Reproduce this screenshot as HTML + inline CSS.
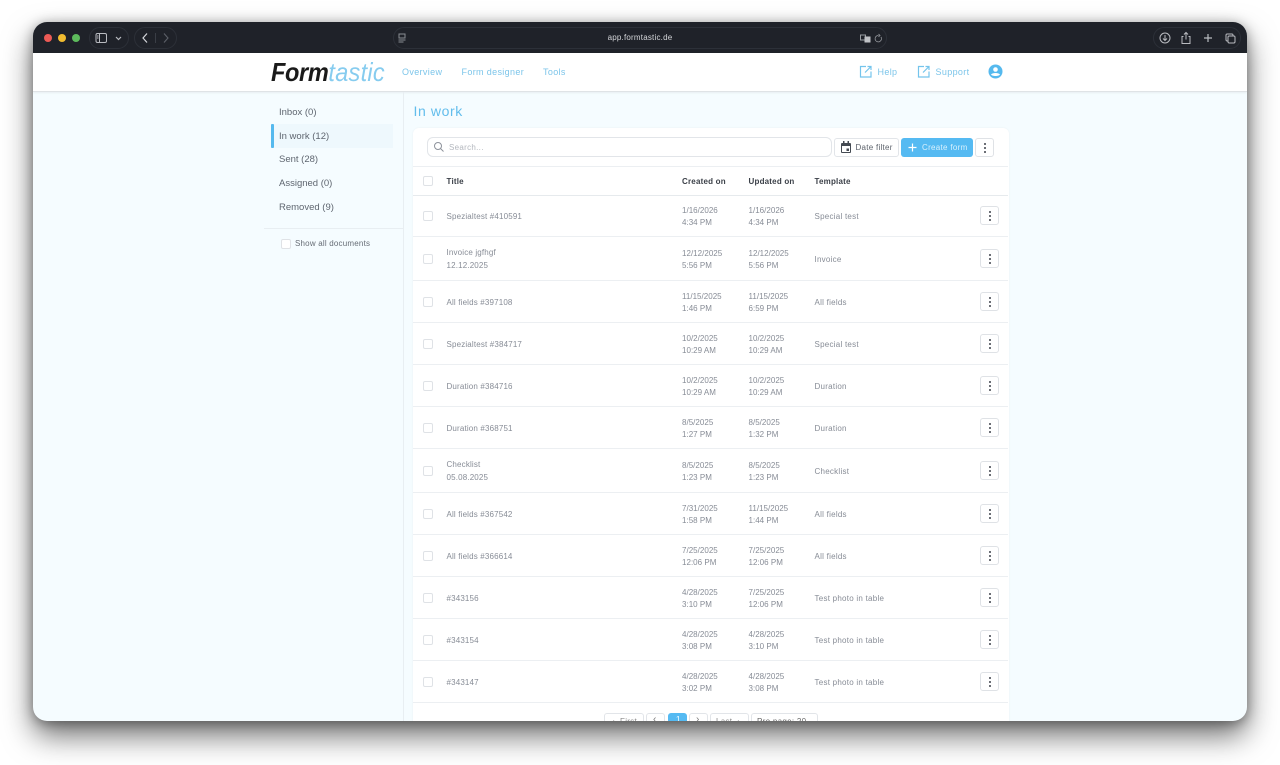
<!DOCTYPE html>
<html><head><meta charset="utf-8">
<style>
html,body{margin:0;padding:0;width:1280px;height:765px;overflow:hidden;background:#fff;font-family:"Liberation Sans",sans-serif}
.a{position:absolute;white-space:nowrap}
#win{position:absolute;left:33px;top:22px;width:1214px;height:699px;border-radius:14px;overflow:hidden;background:#f5fcff;box-shadow:0 15px 30px rgba(0,0,0,.55),0 2px 12px rgba(0,0,0,.35)}
#in{position:absolute;left:-33px;top:-22px;width:1280px;height:765px}
.pill{position:absolute;border:1px solid #2c3038;background:#1f2229;box-sizing:border-box}
.nav{font-size:9px;color:#7cc5ea;letter-spacing:.35px;top:67px}
.side{font-size:9.5px;color:#5f6670;left:279px;letter-spacing:0}
.th{font-size:8px;font-weight:bold;color:#3a3f47;top:177px;letter-spacing:.2px}
.td{font-size:8px;color:#878c96;letter-spacing:.3px}
.td[style*="left:446.5px"]{letter-spacing:.16px}
.td[style*="left:682px"],.td[style*="left:748.5px"]{letter-spacing:.02px}
.td[style*="left:814.5px"]{letter-spacing:.25px}
.line{position:absolute;left:413px;width:595px;height:1px;background:#eceff2}
.cb{position:absolute;left:422.5px;width:8px;height:8px;border:1px solid #dfe2e6;border-radius:2px;background:#fff}
.btn{position:absolute;box-sizing:border-box;border:1px solid #e2e5e9;border-radius:3px;background:#fff}
.km{position:absolute;left:980px;width:19px;height:19px;box-sizing:border-box;border:1px solid #dfe2e6;border-radius:3px;background:#fff}
.km i{position:absolute;left:7.5px;width:2px;height:2px;border-radius:1px;background:#3d424a}
.km i:nth-child(1){top:4px}.km i:nth-child(2){top:8px}.km i:nth-child(3){top:12px}
</style></head><body>
<div id="win"><div id="in">
<!-- toolbar -->
<div class="a" style="left:33px;top:22px;width:1214px;height:31px;background:#1f2229"></div>
<div class="a" style="left:44px;top:34px;width:8px;height:8px;border-radius:50%;background:#ec5a55"></div>
<div class="a" style="left:58px;top:34px;width:8px;height:8px;border-radius:50%;background:#f1bc30"></div>
<div class="a" style="left:71.5px;top:34px;width:8px;height:8px;border-radius:50%;background:#5dbb5c"></div>
<div class="pill" style="left:89px;top:27px;width:40px;height:22px;border-radius:11px"></div>
<div class="pill" style="left:134px;top:27px;width:43px;height:22px;border-radius:11px"></div>
<div class="pill" style="left:393px;top:27px;width:494px;height:22px;border-radius:11px"></div>
<div class="pill" style="left:1153px;top:27px;width:88px;height:22px;border-radius:11px"></div>
<svg class="a" style="left:0;top:22px" width="1280" height="31" fill="none" stroke="#b9bbc0" stroke-width="1" viewBox="0 22 1280 31">
<rect x="96" y="33.5" width="10.5" height="9" rx="1.5"/><path d="M99.5 33.5v9M97 36h1.5M97 38h1.5"/>
<path d="M116 37l2.5 2.5 2.5-2.5" stroke-width="1.2"/>
<path d="M147 33.5l-4 4.500 4 4.500" stroke-width="1.200" stroke="#d4d6da"/>
<path d="M155.5 33v10" stroke="#3a3e46"/>
<path d="M164 33.5l4 4.500-4 4.500" stroke-width="1.100" stroke="#5c6068"/>
<path d="M399 34h6v4h-6zM398.5 40h7M398.5 42h5" stroke="#8a8d93"/>
<rect x="860.5" y="35" width="5" height="5" stroke="#9a9da2"/><rect x="865" y="37" width="5" height="5" fill="#c0c2c6" stroke="#c0c2c6"/>
<path d="M881 37a3.200 3.200 0 1 1-2.500-1.500M878.500 34l1.500 1.500-1.500 1.300" stroke="#9a9da2" stroke-width=".8"/>
<circle cx="1165" cy="38" r="5"/><path d="M1165 35v5M1163 38.500l2 2 2-2"/>
<path d="M1183.5 36.500h-1.500v7h8v-7h-1.500M1186 32.500v7M1184 34.500l2-2 2 2"/>
<path d="M1208 34v8M1204 38h8" stroke-width="1.200"/>
<rect x="1226" y="34" width="7" height="7" rx="1.200"/><rect x="1228" y="36" width="7" height="7" rx="1.200" fill="#1f2229"/>
</svg>
<div class="a" style="left:540px;top:33px;width:200px;text-align:center;font-size:8px;color:#d4d6d9;letter-spacing:.2px">app.formtastic.de</div>
<!-- header -->
<div class="a" style="left:33px;top:53px;width:1214px;height:38px;background:#fff;border-bottom:1px solid #dfe3e6;box-shadow:0 1px 2px rgba(0,0,0,.06)"></div>
<div class="a" style="left:271px;top:57.5px;font-size:26px;line-height:28px;font-style:italic;letter-spacing:-.4px;transform:scaleX(.905);transform-origin:0 50%"><span style="font-weight:bold;color:#1a1a1a">Form</span><span style="color:#86ccef;letter-spacing:.3px">tastic</span></div>
<div class="a nav" style="left:402px">Overview</div>
<div class="a nav" style="left:461.5px">Form designer</div>
<div class="a nav" style="left:543px">Tools</div>
<div class="a nav" style="left:877.5px">Help</div>
<div class="a nav" style="left:935.5px">Support</div>
<svg class="a" style="left:0;top:53px" width="1280" height="38" fill="none" viewBox="0 53 1280 38">
<path d="M866 66.500h-5.500v10.500h10.500v-5.500M865 72.500l5.500-5.500M867.500 66.500h3.500v3.500" stroke="#74c4ec" stroke-width="1.200"/>
<path d="M924 66.500h-5.500v10.500h10.500v-5.500M923 72.500l5.500-5.500M925.500 66.500h3.500v3.500" stroke="#74c4ec" stroke-width="1.200"/>
<circle cx="995.5" cy="71.5" r="7" fill="#55b9ee"/><circle cx="995.5" cy="69.5" r="2.300" fill="#fff"/><path d="M991 74.500c1.500-2 7.500-2 9 0-1 2-8 2-9 0z" fill="#fff"/>
</svg>
<!-- sidebar -->
<div class="a" style="left:403px;top:92px;width:1px;height:629px;background:#e8eef2"></div>
<div class="a" style="left:271px;top:124px;width:122px;height:24px;background:#eef8fd"></div>
<div class="a" style="left:271px;top:124px;width:3px;height:24px;background:#55b9ee;border-radius:1px"></div>
<div class="a side" style="top:107px">Inbox (0)</div>
<div class="a side" style="top:130.5px">In work (12)</div>
<div class="a side" style="top:154px">Sent (28)</div>
<div class="a side" style="top:178px">Assigned (0)</div>
<div class="a side" style="top:201.5px">Removed (9)</div>
<div class="a" style="left:264px;top:228px;width:139px;height:1px;background:#e8eef2"></div>
<div class="a" style="left:281px;top:239px;width:8px;height:8px;border:1px solid #dfe2e6;border-radius:2px;background:#fff"></div>
<div class="a" style="left:295px;top:239px;font-size:8px;color:#666c75;letter-spacing:.2px">Show all documents</div>
<!-- content -->
<div class="a" style="left:413.5px;top:102.5px;font-size:14px;color:#62bdec;letter-spacing:.6px">In work</div>
<div class="a" style="left:413px;top:128px;width:596px;height:600px;background:#fff;border-radius:6px 6px 0 0;box-shadow:0 0 2px rgba(0,0,0,.05)"></div>
<div class="btn" style="left:427px;top:137px;width:405px;height:20px;border-radius:6px"></div>
<svg class="a" style="left:433px;top:141px" width="12" height="12" fill="none" stroke="#8d929b" stroke-width="1"><circle cx="5" cy="5" r="3.500"/><path d="M7.500 7.500l3 3"/></svg>
<div class="a" style="left:449px;top:143px;font-size:8px;color:#b3b7be;letter-spacing:.3px">Search...</div>
<div class="btn" style="left:834px;top:138px;width:65px;height:19px"></div>
<svg class="a" style="left:840px;top:141px" width="12" height="12"><path d="M2 2h8a1 1 0 0 1 1 1v8a1 1 0 0 1-1 1H2a1 1 0 0 1-1-1V3a1 1 0 0 1 1-1zm0 3v6h8V5zM3 0h1.500v2H3zM7.500 0H9v2H7.500zM6.500 7.500h2.500V10H6.500z" fill="#444a52" fill-rule="evenodd"/></svg>
<div class="a" style="left:855.5px;top:143px;font-size:8px;color:#5d636c;letter-spacing:.27px">Date filter</div>
<div class="a" style="left:901px;top:138px;width:72px;height:19px;background:#55baf2;border-radius:3px"></div>
<svg class="a" style="left:908px;top:143px" width="9" height="9" stroke="#fff" stroke-width="1.200"><path d="M4.500 .5v8M.5 4.500h8"/></svg>
<div class="a" style="left:922px;top:143px;font-size:8px;color:#d9f1fd;letter-spacing:.3px">Create form</div>
<div class="km" style="left:975px;top:138px"><i></i><i></i><i></i></div>
<div class="line" style="top:166px"></div>
<div class="line" style="top:195px;background:#e6eaed"></div>
<div class="cb" style="top:176px"></div>
<div class="a th" style="left:446.5px">Title</div>
<div class="a th" style="left:682px">Created on</div>
<div class="a th" style="left:748.5px">Updated on</div>
<div class="a th" style="left:814.5px">Template</div>

<!-- row 1 -->
<div class="cb" style="top:210.5px"></div><div class="a td" style="left:446.5px;top:211.5px">Spezialtest #410591</div>
<div class="a td" style="left:682px;top:205px;line-height:11.5px">1/16/2026<br>4:34 PM</div><div class="a td" style="left:748.5px;top:205px;line-height:11.5px">1/16/2026<br>4:34 PM</div>
<div class="a td" style="left:814.5px;top:211.5px">Special test</div><div class="km" style="top:206px"><i></i><i></i><i></i></div><div class="line" style="top:236px"></div>
<!-- row 2 -->
<div class="cb" style="top:253.5px"></div><div class="a td" style="left:446.5px;top:245.5px;line-height:13.5px">Invoice jgfhgf<br>12.12.2025</div>
<div class="a td" style="left:682px;top:248px;line-height:11.5px">12/12/2025<br>5:56 PM</div><div class="a td" style="left:748.5px;top:248px;line-height:11.5px">12/12/2025<br>5:56 PM</div>
<div class="a td" style="left:814.5px;top:254.5px">Invoice</div><div class="km" style="top:249px"><i></i><i></i><i></i></div><div class="line" style="top:280px"></div>
<!-- row 3 -->
<div class="cb" style="top:296.5px"></div><div class="a td" style="left:446.5px;top:297.5px">All fields #397108</div>
<div class="a td" style="left:682px;top:291px;line-height:11.5px">11/15/2025<br>1:46 PM</div><div class="a td" style="left:748.5px;top:291px;line-height:11.5px">11/15/2025<br>6:59 PM</div>
<div class="a td" style="left:814.5px;top:297.5px">All fields</div><div class="km" style="top:292px"><i></i><i></i><i></i></div><div class="line" style="top:322px"></div>
<!-- row 4 -->
<div class="cb" style="top:338.5px"></div><div class="a td" style="left:446.5px;top:339.5px">Spezialtest #384717</div>
<div class="a td" style="left:682px;top:333px;line-height:11.5px">10/2/2025<br>10:29 AM</div><div class="a td" style="left:748.5px;top:333px;line-height:11.5px">10/2/2025<br>10:29 AM</div>
<div class="a td" style="left:814.5px;top:339.5px">Special test</div><div class="km" style="top:334px"><i></i><i></i><i></i></div><div class="line" style="top:364px"></div>
<!-- row 5 -->
<div class="cb" style="top:380.5px"></div><div class="a td" style="left:446.5px;top:381.5px">Duration #384716</div>
<div class="a td" style="left:682px;top:375px;line-height:11.5px">10/2/2025<br>10:29 AM</div><div class="a td" style="left:748.5px;top:375px;line-height:11.5px">10/2/2025<br>10:29 AM</div>
<div class="a td" style="left:814.5px;top:381.5px">Duration</div><div class="km" style="top:376px"><i></i><i></i><i></i></div><div class="line" style="top:406px"></div>
<!-- row 6 -->
<div class="cb" style="top:422.5px"></div><div class="a td" style="left:446.5px;top:423.5px">Duration #368751</div>
<div class="a td" style="left:682px;top:417px;line-height:11.5px">8/5/2025<br>1:27 PM</div><div class="a td" style="left:748.5px;top:417px;line-height:11.5px">8/5/2025<br>1:32 PM</div>
<div class="a td" style="left:814.5px;top:423.5px">Duration</div><div class="km" style="top:418px"><i></i><i></i><i></i></div><div class="line" style="top:448px"></div>
<!-- row 7 -->
<div class="cb" style="top:465.5px"></div><div class="a td" style="left:446.5px;top:457.5px;line-height:13.5px">Checklist<br>05.08.2025</div>
<div class="a td" style="left:682px;top:460px;line-height:11.5px">8/5/2025<br>1:23 PM</div><div class="a td" style="left:748.5px;top:460px;line-height:11.5px">8/5/2025<br>1:23 PM</div>
<div class="a td" style="left:814.5px;top:466.5px">Checklist</div><div class="km" style="top:461px"><i></i><i></i><i></i></div><div class="line" style="top:492px"></div>
<!-- row 8 -->
<div class="cb" style="top:508.5px"></div><div class="a td" style="left:446.5px;top:509.5px">All fields #367542</div>
<div class="a td" style="left:682px;top:503px;line-height:11.5px">7/31/2025<br>1:58 PM</div><div class="a td" style="left:748.5px;top:503px;line-height:11.5px">11/15/2025<br>1:44 PM</div>
<div class="a td" style="left:814.5px;top:509.5px">All fields</div><div class="km" style="top:504px"><i></i><i></i><i></i></div><div class="line" style="top:534px"></div>
<!-- row 9 -->
<div class="cb" style="top:550.5px"></div><div class="a td" style="left:446.5px;top:551.5px">All fields #366614</div>
<div class="a td" style="left:682px;top:545px;line-height:11.5px">7/25/2025<br>12:06 PM</div><div class="a td" style="left:748.5px;top:545px;line-height:11.5px">7/25/2025<br>12:06 PM</div>
<div class="a td" style="left:814.5px;top:551.5px">All fields</div><div class="km" style="top:546px"><i></i><i></i><i></i></div><div class="line" style="top:576px"></div>
<!-- row 10 -->
<div class="cb" style="top:592.5px"></div><div class="a td" style="left:446.5px;top:593.5px">#343156</div>
<div class="a td" style="left:682px;top:587px;line-height:11.5px">4/28/2025<br>3:10 PM</div><div class="a td" style="left:748.5px;top:587px;line-height:11.5px">7/25/2025<br>12:06 PM</div>
<div class="a td" style="left:814.5px;top:593.5px">Test photo in table</div><div class="km" style="top:588px"><i></i><i></i><i></i></div><div class="line" style="top:618px"></div>
<!-- row 11 -->
<div class="cb" style="top:634.5px"></div><div class="a td" style="left:446.5px;top:635.5px">#343154</div>
<div class="a td" style="left:682px;top:629px;line-height:11.5px">4/28/2025<br>3:08 PM</div><div class="a td" style="left:748.5px;top:629px;line-height:11.5px">4/28/2025<br>3:10 PM</div>
<div class="a td" style="left:814.5px;top:635.5px">Test photo in table</div><div class="km" style="top:630px"><i></i><i></i><i></i></div><div class="line" style="top:660px"></div>
<!-- row 12 -->
<div class="cb" style="top:676.5px"></div><div class="a td" style="left:446.5px;top:677.5px">#343147</div>
<div class="a td" style="left:682px;top:671px;line-height:11.5px">4/28/2025<br>3:02 PM</div><div class="a td" style="left:748.5px;top:671px;line-height:11.5px">4/28/2025<br>3:08 PM</div>
<div class="a td" style="left:814.5px;top:677.5px">Test photo in table</div><div class="km" style="top:672px"><i></i><i></i><i></i></div><div class="line" style="top:702px"></div>
<!-- pagination -->
<div class="btn" style="left:604px;top:713px;width:40px;height:20px"></div>
<div class="a td" style="left:612px;top:717px;color:#888">‹ &nbsp;First</div>
<div class="btn" style="left:646px;top:713px;width:19px;height:20px"></div>
<div class="a td" style="left:653px;top:714px;font-size:10px;color:#777">‹</div>
<div class="a" style="left:668px;top:713px;width:19px;height:20px;background:#55baf2;border-radius:3px"></div>
<div class="a td" style="left:676px;top:715px;color:#fff">1</div>
<div class="btn" style="left:689px;top:713px;width:19px;height:20px"></div>
<div class="a td" style="left:696px;top:714px;font-size:10px;color:#777">›</div>
<div class="btn" style="left:710px;top:713px;width:39px;height:20px"></div>
<div class="a td" style="left:716px;top:717px;color:#888">Last &nbsp;›</div>
<div class="btn" style="left:751px;top:713px;width:67px;height:20px"></div>
<div class="a td" style="left:757px;top:717px;color:#666">Pro page: 20 &nbsp;⌄</div>
</div></div>
</body></html>
